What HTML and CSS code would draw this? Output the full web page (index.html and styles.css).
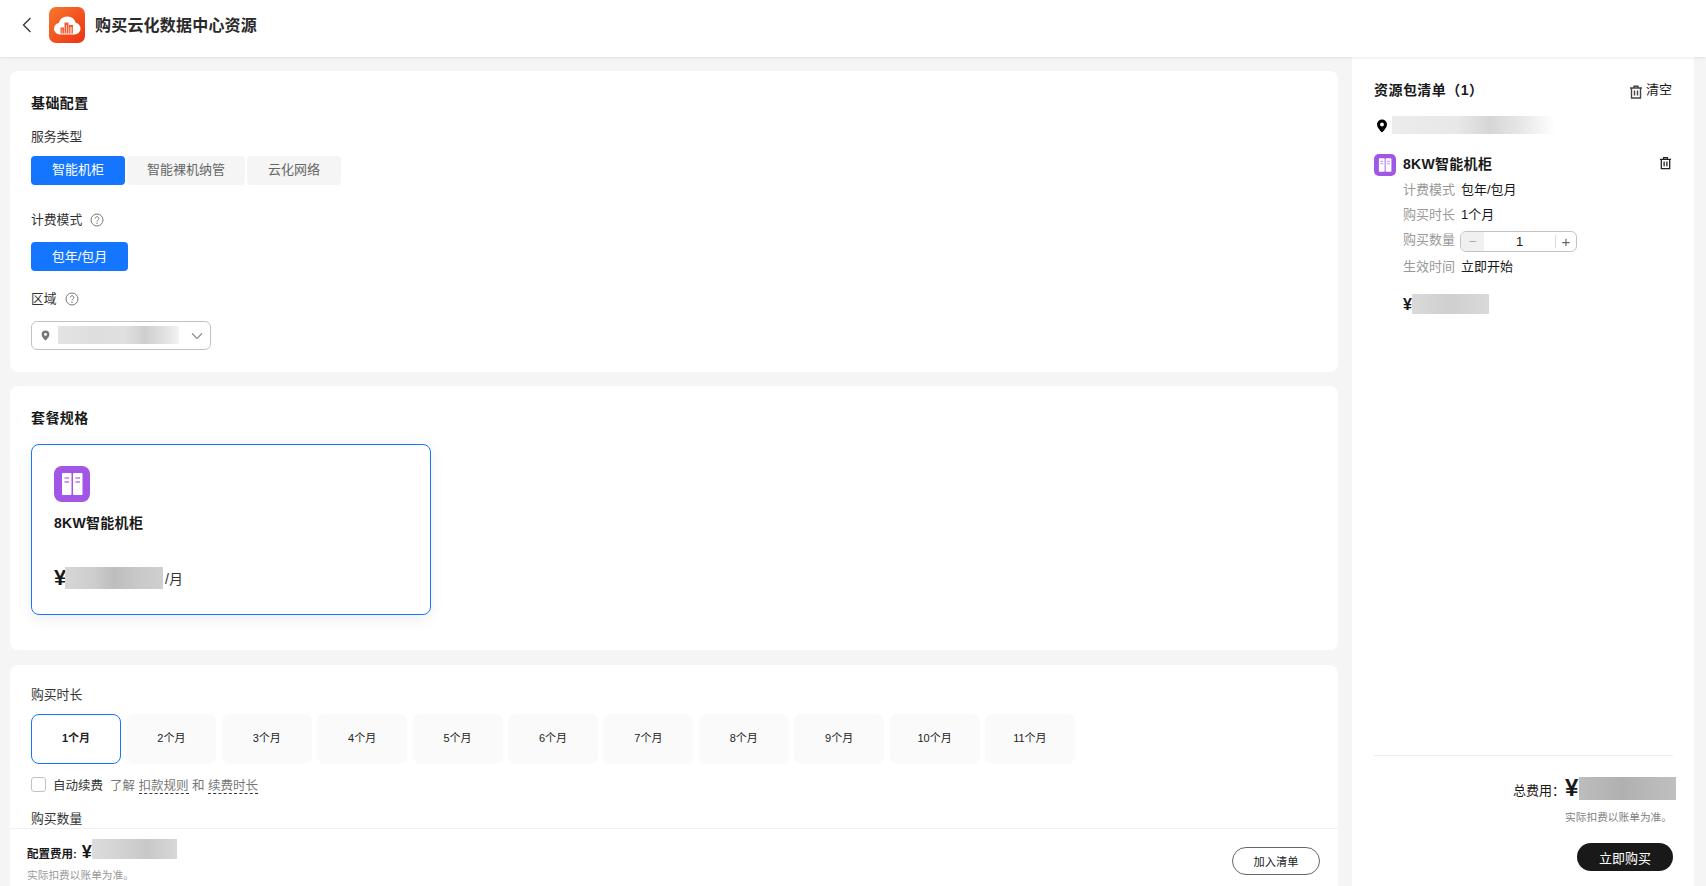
FILE: index.html
```html
<!DOCTYPE html>
<html lang="zh-CN">
<head>
<meta charset="utf-8">
<title>购买云化数据中心资源</title>
<link rel="stylesheet" href="styles.css">
</head>
<body>
<header class="topbar">
  <svg class="back" viewBox="0 0 12 18" width="12" height="18"><path d="M9.5 2 2.5 9l7 7" fill="none" stroke="#333" stroke-width="1.3"/></svg>
  <svg class="logo" viewBox="0 0 36 36" width="36" height="36">
    <defs><linearGradient id="lg" x1="0" y1="0" x2="1" y2="1"><stop offset="0" stop-color="#f8782c"/><stop offset="1" stop-color="#ec3214"/></linearGradient></defs>
    <rect width="36" height="36" rx="7" fill="url(#lg)"/>
    <path d="M11 27.500a5.800 5.800 0 0 1-1.300-11.500A8.800 8.800 0 0 1 26.700 15.800 5.900 5.900 0 0 1 25.500 27.500Z" fill="#fff"/>
    <path d="M11.500 26.500v-6h3.500v6ZM15.500 26.500V15.500h4v11ZM20 26.500V18h4v8.500Z" fill="#f25c30"/>
    <path d="M21.300 20v6.500M22.700 20v6.500M17.500 18v8.500M13.200 22.500v4" stroke="#fff" stroke-width=".6"/>
  </svg>
  <h1 class="page-title">购买云化数据中心资源</h1>
</header>

<div class="layout">
  <main class="main">
    <div class="scroll">
      <section class="card card-basic">
        <h2 class="card-title">基础配置</h2>
        <div class="label label-first">服务类型</div>
        <div class="tabs">
          <span class="tab tab-on tab-a">智能机柜</span>
          <span class="tab tab-b">智能裸机纳管</span>
          <span class="tab tab-a">云化网络</span>
        </div>
        <div class="label label-gap">计费模式
          <svg class="help" viewBox="0 0 14 14" width="14" height="14"><circle cx="7" cy="7" r="6" fill="none" stroke="#777" stroke-width="1"/><path d="M5.200 5.500a1.800 1.800 0 1 1 2.700 1.600c-.6.400-.9.700-.9 1.400" fill="none" stroke="#777" stroke-width="1"/><circle cx="7" cy="10.300" r=".7" fill="#777"/></svg>
        </div>
        <div class="tabs tabs-bill"><span class="tab tab-on tab-bill">包年/包月</span></div>
        <div class="label label-region">区域
          <svg class="help" viewBox="0 0 14 14" width="14" height="14"><circle cx="7" cy="7" r="6" fill="none" stroke="#777" stroke-width="1"/><path d="M5.200 5.500a1.800 1.800 0 1 1 2.700 1.600c-.6.400-.9.700-.9 1.400" fill="none" stroke="#777" stroke-width="1"/><circle cx="7" cy="10.300" r=".7" fill="#777"/></svg>
        </div>
        <div class="select">
          <svg viewBox="0 0 10 12" width="9" height="11"><path d="M5 .5a4.300 4.300 0 0 0-4.300 4.300C.7 8 5 11.500 5 11.500S9.300 8 9.300 4.800A4.300 4.300 0 0 0 5 .5Z" fill="#777"/><circle cx="5" cy="4.800" r="1.600" fill="#fff"/></svg>
          <span class="blur blur-select"></span>
          <svg class="chev" viewBox="0 0 12 8" width="12" height="8"><path d="M1 1.500 6 6.500l5-5" fill="none" stroke="#888" stroke-width="1.100"/></svg>
        </div>
      </section>

      <section class="card card-plan">
        <h2 class="card-title">套餐规格</h2>
        <div class="plan">
          <svg viewBox="0 0 36 36" width="36" height="36" class="plan-icon"><rect width="36" height="36" rx="8" fill="#a256e6"/><rect x="8" y="7" width="9.500" height="22" rx="1" fill="#fff"/><rect x="19" y="7" width="9.500" height="22" rx="1" fill="#fff"/><path d="M10.500 12h4.500M10.500 16h4.500M21.500 12h4.500M21.500 16h4.500" stroke="#b77ded" stroke-width="1.500"/></svg>
          <div class="plan-name">8KW智能机柜</div>
          <div class="plan-price"><span class="yen">¥</span><span class="blur blur-plan"></span><span class="per">/月</span></div>
        </div>
      </section>

      <section class="card card-time">
        <div class="label">购买时长</div>
        <div class="months">
          <span class="month month-on">1个月</span>
          <span class="month">2个月</span>
          <span class="month">3个月</span>
          <span class="month">4个月</span>
          <span class="month">5个月</span>
          <span class="month">6个月</span>
          <span class="month">7个月</span>
          <span class="month">8个月</span>
          <span class="month">9个月</span>
          <span class="month">10个月</span>
          <span class="month">11个月</span>
        </div>
        <div class="renew">
          <span class="check"></span>
          <span class="renew-on">自动续费</span>
          <span class="renew-muted">了解 <u class="dash">扣款规则</u> 和 <u class="dash">续费时长</u></span>
        </div>
        <div class="label label-qty">购买数量</div>
      </section>
    </div>

    <footer class="bar">
      <div>
        <div class="bar-fee"><span class="bar-label">配置费用:</span><span class="bar-yen">¥</span><span class="blur blur-bar"></span></div>
        <div class="note">实际扣费以账单为准。</div>
      </div>
      <button class="add-btn">加入清单</button>
    </footer>
  </main>

  <aside class="side">
    <div class="side-head">
      <h2 class="side-title">资源包清单（1）</h2>
      <div class="clear">
        <svg viewBox="0 0 14 14" width="14" height="14"><path d="M1 3h12M5 3V1.300h4V3M2.500 3v10h9V3M5.500 5.500v5M8.500 5.500v5" fill="none" stroke="#444" stroke-width="1.400"/></svg>
        <span>清空</span>
      </div>
    </div>
    <div class="side-loc">
      <svg viewBox="0 0 12 14" width="12" height="14"><path d="M6 .5A5 5 0 0 0 1 5.500C1 9 6 13.500 6 13.500S11 9 11 5.500A5 5 0 0 0 6 .5Z" fill="#000"/><circle cx="6" cy="5.500" r="1.900" fill="#fff"/></svg>
      <span class="blur blur-loc"></span>
    </div>
    <div class="item-head">
      <svg viewBox="0 0 36 36" width="22" height="22"><rect width="36" height="36" rx="8" fill="#a256e6"/><rect x="8" y="7" width="9.500" height="22" rx="1" fill="#fff"/><rect x="19" y="7" width="9.500" height="22" rx="1" fill="#fff"/><path d="M10.500 12h4.500M10.500 16h4.500M21.500 12h4.500M21.500 16h4.500" stroke="#b77ded" stroke-width="1.500"/></svg>
      <span class="item-name">8KW智能机柜</span>
      <svg class="item-del" viewBox="0 0 14 14" width="13" height="14"><path d="M1 3h12M5 3V1.300h4V3M2.500 3v10h9V3M5.500 5.500v5M8.500 5.500v5" fill="none" stroke="#222" stroke-width="1.400"/></svg>
    </div>
    <dl class="rows">
      <div class="row"><dt>计费模式</dt><dd>包年/包月</dd></div>
      <div class="row"><dt>购买时长</dt><dd>1个月</dd></div>
      <div class="row"><dt>购买数量</dt><dd class="stepper"><span class="step-minus">−</span><span class="step-val">1</span><span class="step-plus">+</span></dd></div>
      <div class="row row-last"><dt>生效时间</dt><dd>立即开始</dd></div>
    </dl>
    <div class="item-price"><span class="item-yen">¥</span><span class="blur blur-item"></span></div>

    <div class="side-foot">
      <div class="total"><span class="total-label">总费用：</span><span class="total-yen">¥</span><span class="blur blur-total"></span></div>
      <div class="note note-total">实际扣费以账单为准。</div>
      <button class="buy-btn">立即购买</button>
    </div>
  </aside>
</div>
</body>
</html>
```

FILE: styles.css
```css
* { box-sizing: border-box; }
html, body { margin: 0; height: 100%; }
body {
  height: 886px;
  overflow: hidden;
  display: flex;
  flex-direction: column;
  background: #f5f5f5;
  color: #191919;
  font-family: "Liberation Sans", "Noto Sans CJK SC", sans-serif;
  font-size: 13px;
}
h1, h2, dl, dd { margin: 0; }

.topbar {
  flex: 0 0 57px;
  display: flex;
  align-items: center;
  padding: 0 0 7px 21px;
  background: #fff;
  box-shadow: 0 1px 3px rgba(0, 0, 0, .08);
  position: relative;
  z-index: 2;
}
.back { margin-right: 16px; }
.logo { margin-right: 10px; }
.page-title { font-size: 16px; font-weight: 700; line-height: 26px; color: #2a2a2a; margin-top: 1px; letter-spacing: .2px; }

.layout { flex: 1; display: flex; min-height: 0; padding: 0 12px 0 10px; gap: 14px; }

.main { width: 1328px; display: flex; flex-direction: column; min-height: 0; }
.scroll { flex: 1; min-height: 0; overflow: hidden; padding-top: 14px; display: flex; flex-direction: column; gap: 14px; }
.card { background: #fff; border-radius: 8px; padding: 0 21px; flex: none; }
.card-basic { height: 301px; padding-top: 23px; }
.card-plan { height: 264px; padding-top: 23px; }
.card-time { height: 240px; margin-top: 1px; padding-top: 21px; }
.card-title { font-size: 14px; font-weight: 700; line-height: 18px; letter-spacing: .4px; }

.label { font-size: 12.800px; line-height: 18px; display: flex; align-items: center; gap: 8px; color: #333; }
.label-first { margin-top: 16px; }
.label-gap { margin-top: 26px; }
.label-region { margin-top: 19px; }
.label-qty { margin-top: 17px; }

.tabs { display: flex; gap: 2px; margin-top: 10px; }
.tabs-bill { margin-top: 13px; }
.tab { height: 29px; line-height: 28px; text-align: center; font-size: 13px; border-radius: 4px; background: #f5f5f5; color: #666; }
.tab-a { width: 94px; }
.tab-b { width: 118px; }
.tab-bill { width: 97px; line-height: 29px; }
.tab-on { background: #1476ff; color: #fff; }

.select {
  width: 180px;
  height: 29px;
  margin-top: 13px;
  display: flex;
  align-items: center;
  padding: 0 7px 0 9px;
  border: 1px solid #c2c2c2;
  border-radius: 6px;
  gap: 8px;
}
.chev { margin-left: auto; }

.blur { display: block; flex: none; }
.blur-select { width: 121px; height: 18px; margin-top: -1px; background: linear-gradient(90deg, #e4e4e4, #dedede 30%, #e0e0e0 55%, #cfcfcf 72%, #e6e6e6 92%, #f4f4f4); }
.blur-plan { width: 98px; height: 22px; background: linear-gradient(90deg, #d6d6d6, #cdcdcd 30%, #bdbdbd 50%, #c9c9c9 75%, #cfcfcf); }
.blur-bar { width: 85px; height: 20px; background: linear-gradient(90deg, #dcdcdc, #cfcfcf 45%, #c8c8c8 65%, #d8d8d8); }
.blur-loc { width: 163px; height: 18px; background: linear-gradient(90deg, #ececec, #e8e8e8 40%, #d6d6d6 60%, #e8e8e8 80%, #fff); }
.blur-item { width: 77px; height: 20px; background: linear-gradient(90deg, #dadada, #cfcfcf 50%, #d9d9d9); }
.blur-total { width: 97px; height: 23px; margin-top: 2px; background: linear-gradient(90deg, #bdbdbd, #b0b0b0 45%, #b8b8b8 70%, #bfbfbf); }

.plan {
  width: 400px;
  height: 171px;
  margin-top: 17px;
  padding: 21px 22px 0;
  border: 1px solid #1476ff;
  border-radius: 8px;
  box-shadow: 0 4px 16px rgba(0, 0, 0, .07);
}
.plan-icon { display: block; }
.plan-name { margin-top: 12px; font-size: 14px; font-weight: 700; line-height: 18px; letter-spacing: .3px; }
.plan-price { margin-top: 35px; display: flex; align-items: center; }
.yen { font-size: 22px; font-weight: 700; line-height: 22px; width: 11px; }
.per { font-size: 14px; margin-left: 2px; color: #333; }

.months { display: flex; gap: 5.400px; margin-top: 10px; }
.month { width: 90px; height: 50px; line-height: 49px; text-align: center; font-size: 11px; border-radius: 8px; background: #fafafa; color: #222; }
.month-on { background: #fff; border: 1px solid #1476ff; line-height: 47px; font-weight: 700; }

.renew { display: flex; align-items: center; margin-top: 11px; height: 18px; font-size: 12.500px; }
.check { width: 15px; height: 15px; border: 1px solid #c2c2c2; border-radius: 3px; margin: 1px 7px 0 0; }
.renew-on { color: #333; margin-right: 7px; }
.renew-muted { color: #777; }
.dash { text-decoration: none; border-bottom: 1px dashed #333; }

.bar {
  flex: 0 0 58px;
  display: flex;
  justify-content: space-between;
  align-items: flex-start;
  padding: 8px 18px 0 17px;
  background: #fff;
  border-top: 1px solid #f0f0f0;
}
.bar-fee { display: flex; align-items: flex-end; height: 22px; }
.bar-label { font-size: 11.500px; font-weight: 700; line-height: 17px; margin: 0 5px -4px 0; }
.bar-yen { font-size: 18px; font-weight: 700; line-height: 20px; width: 10px; margin-bottom: -3px; }
.note { font-size: 10.700px; line-height: 16px; color: #999; margin-top: 8px; }
.add-btn {
  width: 88px;
  height: 28px;
  padding: 0;
  margin-top: 10px;
  border: 1px solid #666;
  border-radius: 14px;
  background: #fff;
  color: #191919;
  font: 11.200px "Liberation Sans", "Noto Sans CJK SC", sans-serif;
}

.side { width: 342px; background: #fff; padding: 0 21px 0 22px; display: flex; flex-direction: column; }
.side-head { display: flex; justify-content: space-between; align-items: center; margin-top: 24px; height: 18px; }
.side-title { font-size: 14px; font-weight: 700; line-height: 18px; letter-spacing: .45px; }
.clear { display: flex; align-items: center; gap: 3px; font-size: 13px; padding-right: 1px; }
.clear svg { margin-top: 3px; }
.clear span { margin-top: -3px; }
.side-loc { display: flex; align-items: center; gap: 4px; margin-top: 17px; padding-left: 2px; height: 18px; }
.side-loc svg { margin-top: 2px; }
.item-head { display: flex; align-items: center; margin-top: 20px; height: 22px; }
.item-name { font-size: 14px; font-weight: 700; margin: -4px 0 0 7px; letter-spacing: .3px; }
.item-del { margin: -4px 1px 0 auto; }
.rows { margin: 0 0 0 29px; }
.row { display: flex; align-items: center; height: 25px; gap: 6px; font-size: 13px; }
.row-last { height: 26px; padding-top: 2px; }
.row dt { color: #999; width: 52px; flex: none; white-space: nowrap; }
.row dd { color: #191919; }
.stepper { display: flex; align-items: center; width: 117px; height: 21px; margin: 5px 0 0 -1px; border: 1px solid #c2c2c2; border-radius: 6px; overflow: hidden; }
.step-minus { width: 23px; height: 100%; background: #f0f0f0; color: #aaa; text-align: center; line-height: 19px; }
.step-val { flex: 1; text-align: center; line-height: 19px; font-size: 13px; }
.step-plus { width: 21px; height: 13px; border-left: 1px solid #ddd; color: #666; text-align: center; line-height: 13px; font-size: 15px; }
.item-price { display: flex; align-items: center; margin: 17px 0 0 29px; height: 20px; }
.item-yen { font-size: 16px; font-weight: 700; width: 9px; margin-top: 2px; }

.side-foot { margin-top: auto; border-top: 1px solid #ededed; height: 131px; padding-top: 20px; display: flex; flex-direction: column; align-items: flex-end; }
.total { display: flex; align-items: center; height: 23px; margin-right: -3px; }
.total-label { font-size: 13px; margin-top: 4px; }
.total-yen { font-size: 24px; font-weight: 700; width: 14px; }
.note-total { margin-top: 10px; margin-right: 1px; color: #808080; }
.buy-btn {
  width: 96px;
  height: 28px;
  margin-top: 18px;
  padding: 0;
  border: 0;
  border-radius: 14px;
  background: #191919;
  color: #fff;
  font: 13px "Liberation Sans", "Noto Sans CJK SC", sans-serif;
}
```
